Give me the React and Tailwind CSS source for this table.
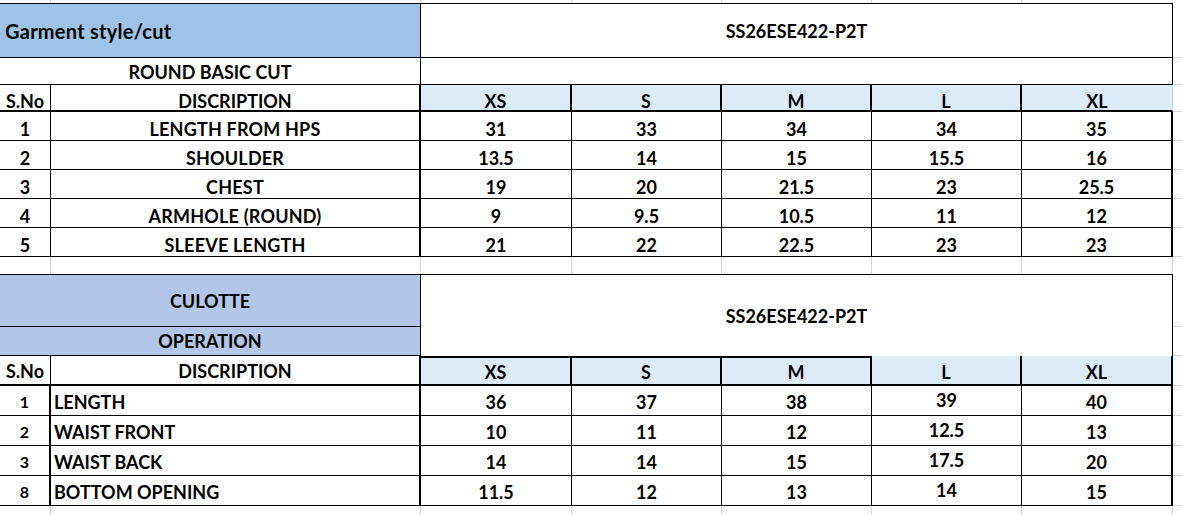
import React from "react";

const t1 = [
  ["1", "LENGTH FROM HPS", "31", "33", "34", "34", "35"],
  ["2", "SHOULDER", "13.5", "14", "15", "15.5", "16"],
  ["3", "CHEST", "19", "20", "21.5", "23", "25.5"],
  ["4", "ARMHOLE (ROUND)", "9", "9.5", "10.5", "11", "12"],
  ["5", "SLEEVE LENGTH", "21", "22", "22.5", "23", "23"],
];

const t2 = [
  ["1", "LENGTH", "36", "37", "38", "39", "40"],
  ["2", "WAIST FRONT", "10", "11", "12", "12.5", "13"],
  ["3", "WAIST BACK", "14", "14", "15", "17.5", "20"],
  ["8", "BOTTOM OPENING", "11.5", "12", "13", "14", "15"],
];

const sizes = ["XS", "S", "M", "L", "XL"];

function Strip({ k }) {
  return (
    <>
      <div key={k + "a"} className="border-r border-[#d4d4d4]" />
      <div key={k + "b"} className="border-r border-[#d4d4d4]" />
      <div key={k + "c"} className="border-r border-[#d4d4d4]" />
      <div key={k + "d"} className="border-r border-[#d4d4d4]" />
      <div key={k + "e"} className="border-r border-[#d4d4d4]" />
      <div key={k + "f"} className="border-r border-[#d4d4d4]" />
      <div key={k + "g"} className="border-r border-[#d4d4d4]" />
      <div key={k + "h"} />
    </>
  );
}

const Gray = () => <div className="border-b border-[#d4d4d4]" />;

export default function App() {
  return (
    <div className="w-[1182px] h-[515px] overflow-hidden bg-white text-black font-['Lato',sans-serif] font-bold text-[18px] leading-none">
      <div className="grid grid-cols-[51px_370px_151px_150px_150px_150px_151px_9px] grid-rows-[3px_55px_27px_27px_29px_29px_29px_29px_29px_17px_53px_29px_30px_30px_30px_30px_30px_9px]">
        <Strip k="top" />

        {/* Row 1 */}
        <div className="col-span-2 flex items-center pl-[5px] pt-[1px] text-[20px] tracking-[0.25px] bg-[#9dc3e6] border-t border-b border-r border-black">
          Garment style/cut
        </div>
        <div className="col-span-5 flex items-center justify-center border-t border-b border-r border-black">
          SS26ESE422-P2T
        </div>
        <Gray />

        {/* Row 2 */}
        <div className="col-span-2 flex items-center justify-center pt-[1px] border-b border-r border-black">
          ROUND BASIC CUT
        </div>
        <div className="col-span-5 border-b border-r border-black" />
        <Gray />

        {/* Header 1 */}
        <div className="flex items-center justify-center pt-[6px] border-b-2 border-r border-black">S.No</div>
        <div className="flex items-center justify-center pt-[6px] border-b-2 border-r-2 border-black">DISCRIPTION</div>
        {sizes.map((s, i) => (
          <div
            key={"h1" + s}
            className={
              i < 4
                ? "flex items-center justify-center pt-[6px] bg-[#ddebf7] border-b-2 border-r-2 border-black"
                : "flex items-center justify-center pt-[6px] bg-[#ddebf7] border-b-2 border-black border-r border-r-[#d4d4d4]"
            }
          >
            {s}
          </div>
        ))}
        <Gray />

        {/* Table 1 data */}
        {t1.map((r) => (
          <React.Fragment key={"t1" + r[0]}>
            <div className="flex items-center justify-center pt-[6px] border-b border-r border-black">{r[0]}</div>
            <div className="flex items-center justify-center pt-[6px] tracking-[0.2px] border-b border-r-2 border-black">{r[1]}</div>
            {r.slice(2).map((v, i) => (
              <div
                key={i}
                className={
                  i < 4
                    ? "flex items-center justify-center pt-[6px] border-b border-r border-black"
                    : "flex items-center justify-center pt-[6px] border-b border-r-2 border-black"
                }
              >
                {v}
              </div>
            ))}
            <Gray />
          </React.Fragment>
        ))}

        {/* Blank row */}
        <Strip k="mid" />

        {/* CULOTTE */}
        <div className="col-span-2 flex items-center justify-center pt-[1px] bg-[#b4c6e7] border-t border-b border-r border-black">
          CULOTTE
        </div>
        <div className="col-span-5 row-span-2 flex items-center justify-center pt-[1px] border-t border-r border-black">
          SS26ESE422-P2T
        </div>
        <div className="col-start-8 border-b border-[#d4d4d4]" />

        <div className="col-span-2 flex items-center justify-center bg-[#b4c6e7] border-b border-r border-black">
          OPERATION
        </div>
        <div className="col-start-8 border-b border-[#d4d4d4]" />

        {/* Header 2 */}
        <div className="flex items-center justify-center pt-[1px] border-b-2 border-r border-black">S.No</div>
        <div className="flex items-center justify-center pt-[1px] border-b-2 border-r-2 border-black">DISCRIPTION</div>
        {sizes.map((s, i) => (
          <div
            key={"h2" + s}
            className={
              i < 3
                ? "flex items-center justify-center pt-[1px] bg-[#ddebf7] border-t-2 border-b-2 border-r-2 border-black"
                : "flex items-center justify-center pt-[3px] bg-[#ddebf7] border-b-2 border-r-2 border-black"
            }
          >
            {s}
          </div>
        ))}
        <Gray />

        {/* Table 2 data */}
        {t2.map((r) => (
          <React.Fragment key={"t2" + r[1]}>
            <div className="flex items-center justify-center pt-[3px] text-[16px] border-b border-r-2 border-black">{r[0]}</div>
            <div className="flex items-center pl-[3px] pt-[3px] border-b border-r-2 border-black">{r[1]}</div>
            {r.slice(2).map((v, i) => (
              <div
                key={i}
                className={
                  i === 4
                    ? "flex items-center justify-center pt-[3px] border-b border-r-2 border-black"
                    : i === 3
                    ? "flex items-center justify-center pb-[1px] border-b border-r border-black"
                    : "flex items-center justify-center pt-[3px] border-b border-r border-black"
                }
              >
                {v}
              </div>
            ))}
            <Gray />
          </React.Fragment>
        ))}

        <Strip k="bot" />
      </div>
    </div>
  );
}
